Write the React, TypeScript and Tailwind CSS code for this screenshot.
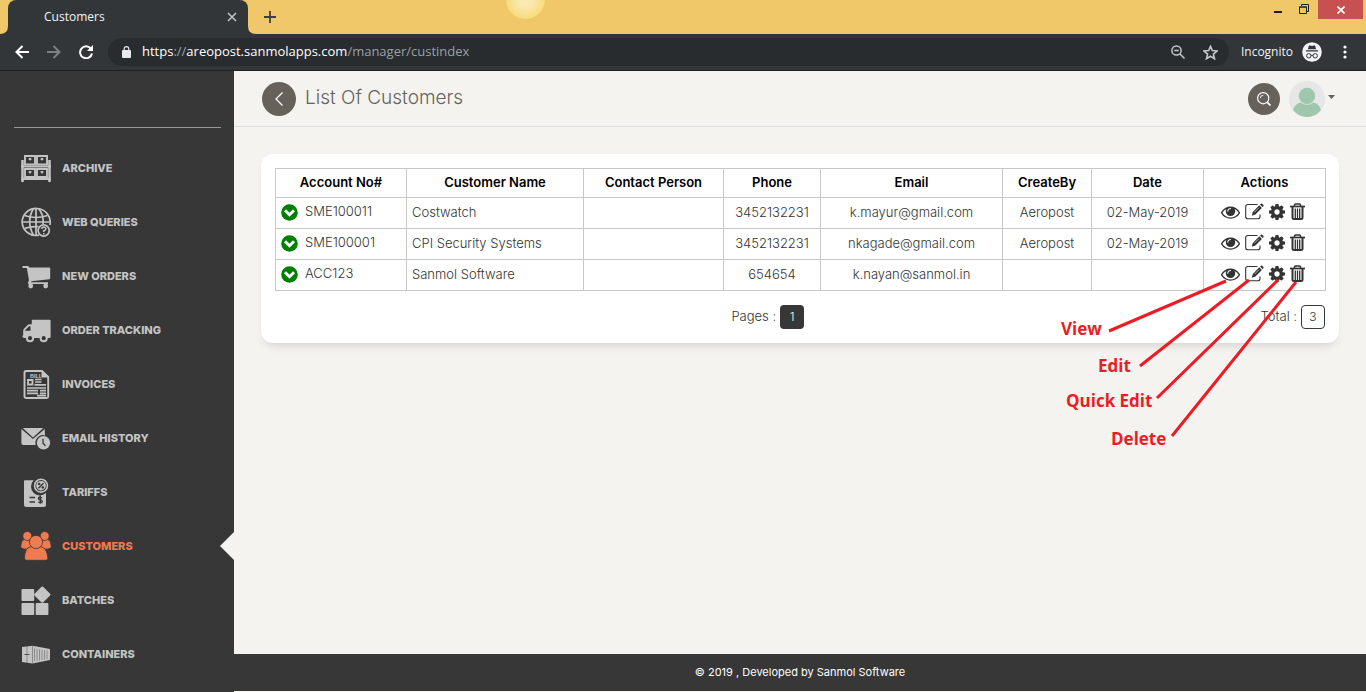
import React from 'react';

type IconProps = { className?: string };

/* ---------- Sidebar icons ---------- */
const ArchiveIcon = () => (
  <svg viewBox="0 0 30 30" className="size-[30px]" fill="none" stroke="currentColor">
    <path d="M1.500 7v22M28.500 7v22" strokeWidth="2.600" />
    <path d="M0 13.500h30M0 26h30" strokeWidth="2" />
    <path d="M4 3h10v8.500H4zM16 3h10v8.500H16zM4 16h10v8H4zM16 16h10v8H16z" strokeWidth="1.900" />
    <path d="M6.500 6h5v3h-5zM18.500 6h5v3h-5zM6.500 19h5v3h-5zM18.500 19h5v3h-5z" fill="#373737" stroke="none" />
    <path d="M8 5v2h2V5M20 5v2h2V5M8 18v2h2v-2M20 18v2h2v-2" fill="currentColor" strokeWidth=".6" />
  </svg>
);

const WebIcon = () => (
  <svg viewBox="0 0 30 30" className="size-[30px]" fill="none" stroke="currentColor" strokeWidth="1.700">
    <path d="M28.800 18A14 13.500 0 1 0 18 28.200" />
    <path d="M15 1.500v27M1.500 15h27M3.500 8.500q11.500 4 23 0M3.500 21.500q6-2.500 14-1.800" />
    <path d="M12.500 1.500Q4.800 14 12.500 28.500M17.500 1.500Q23 8 22 17" />
    <circle cx="22.700" cy="23.500" r="5.600" fill="#373737" />
    <path d="M20.800 22q0-2 2-2t2 1.800q0 1.200-2 2v1.200M22.800 26v1.500" strokeWidth="1.500" />
  </svg>
);

const CartIcon = () => (
  <svg viewBox="0 0 30 30" className="size-[30px]" fill="currentColor">
    <path d="M1.500 5h5.500q1 0 1.200 1.500h20q1 0 1 1v9.500q0 1-1 1.200L10.500 20.200l-.6 1H27V23H8q-1.500 0-1-1.500l1-2.300L5.800 7H1.500z" />
    <circle cx="9.700" cy="25" r="2.400" />
    <circle cx="24.700" cy="25" r="2.400" />
  </svg>
);

const TruckIcon = () => (
  <svg viewBox="0 0 30 30" className="size-[30px]" fill="currentColor">
    <path fillRule="evenodd" d="M10.800 5.500q0-.8.800-.8h17q1 0 1 1V22q0 1-1 1H3q-.8 0-.8-.8h-.7V20.500h.7v-5q0-.8.600-1.400L6.600 10q.6-.7 1.500-.7h2.700zM9.500 11.200H8.200L4.200 15v.8h5.300z" />
    <circle cx="9" cy="23.200" r="3.100" fill="#373737" stroke="currentColor" strokeWidth="2" />
    <circle cx="22.700" cy="23.200" r="3.100" fill="#373737" stroke="currentColor" strokeWidth="2" />
  </svg>
);

const InvoiceIcon = () => (
  <svg viewBox="0 0 30 30" className="size-[30px]" fill="none" stroke="currentColor">
    <path d="M5.500 2H21l6.200 6v19.500q0 1.500-1.500 1.500h-20Q3.500 29 3.500 27.500v-24Q3.500 2 5.500 2z" strokeWidth="1.900" />
    <path d="M21 2v6h6z" fill="currentColor" />
    <text x="9" y="8.700" fontSize="5.500" fontWeight="bold" fill="currentColor" stroke="none" fontFamily="Liberation Sans, sans-serif">BILL</text>
    <path d="M7 11h4.500v4.500H7z" strokeWidth="1.800" />
    <path d="M14 10.500h6.500M14 13h6.500M13.500 15.800H25M6 19h19M6 21.700h11M19 21.700h6M6 24.300h11M19 24.300h6M16 26.700h9" strokeWidth="1.700" />
  </svg>
);

const EmailIcon = () => (
  <svg viewBox="0 0 30 30" className="size-[30px]" fill="currentColor">
    <path d="M1.800 5h20.500L12 14.500z" />
    <path d="M.4 6L12 16 23.700 6l.3 6.400a7.700 7.700 0 0 0-9.300 9.600H2.500Q.4 22 .4 20z" />
    <circle cx="22.500" cy="19.800" r="6.700" />
    <path d="M22 15.800v4.500l2.500 2.500" fill="none" stroke="#373737" strokeWidth="1.300" />
  </svg>
);

const TariffIcon = () => (
  <svg viewBox="0 0 30 30" className="size-[30px]">
    <path d="M3 4.300q0-1 1-1h8.700A8.500 8.500 0 0 0 25 16v11.500q0 2.500-2.500 2.500h-17Q3 30 3 27.500z" fill="currentColor" />
    <circle cx="20" cy="8.700" r="6.400" fill="none" stroke="currentColor" strokeWidth="1.600" />
    <circle cx="20" cy="8.700" r="4.800" fill="currentColor" />
    <path d="M17.500 11.200l5-5" stroke="#373737" strokeWidth="1.400" />
    <circle cx="18.200" cy="7" r="1.300" fill="#373737" />
    <circle cx="21.800" cy="10.500" r="1.300" fill="#373737" />
    <path d="M8.500 20.500H14M8.500 25H14" stroke="#373737" strokeWidth="1.500" />
    <path d="M21 20.800q-3.500-1.400-3.500.600 0 1.200 1.800 1.500 1.900.400 1.900 1.600 0 2-3.900.700M19.300 18.600v8.200" fill="none" stroke="#373737" strokeWidth="1.400" />
  </svg>
);

const CustomersIcon = () => (
  <svg viewBox="0 0 30 30" className="size-[30px]" fill="currentColor" stroke="#373737" strokeWidth=".8">
    <path d="M3 8.200h5.500q2.500 2 2.500 8L6 18.200q-6.300-.2-6.300-2.400Q-.3 10 3 8.200zM27 8.200h-5.500q-2.500 2-2.500 8l5 2q6.300-.2 6.300-2.400 0-5.800-3.300-7.600z" />
    <circle cx="6.300" cy="5" r="4.500" />
    <circle cx="23.700" cy="5" r="4.500" />
    <path d="M9.500 15.800h11q3.500 1 5 5 1.200 3 1.400 6.500 0 2-2.200 2H5.500q-2.200 0-2-2.200.2-10 6-11.300z" />
    <circle cx="15" cy="11" r="6.600" />
  </svg>
);

const BatchesIcon = () => (
  <svg viewBox="0 0 30 30" className="size-[30px]" fill="currentColor">
    <rect x=".5" y="4" width="12.700" height="12" rx="1" />
    <rect x=".5" y="18" width="12.700" height="12" rx="1" />
    <rect x="14.700" y="18" width="12.700" height="12" rx="1" />
    <path d="M20.500 1.800q.8-.8 1.600 0l7 7q.8.800 0 1.600l-7 7q-.8.800-1.600 0l-7-7q-.8-.8 0-1.600z" />
  </svg>
);

const ContainerIcon = () => (
  <svg viewBox="0 0 30 30" className="size-[30px]">
    <path d="M1 8l10.500-1.200L29 10v11l-17.500 3.500L1 23z" fill="currentColor" />
    <path d="M6 7.500v16.300M11.500 7v17.200M13.500 9.500v12.500M16 9.800v12M18.500 10.300v11.200M21 10.700v10.300M23.500 11v9.700M26 11.500v8.700" stroke="#373737" strokeWidth=".4" />
    <path d="M3.500 15.500h5" stroke="#373737" strokeWidth=".8" />
  </svg>
);

/* ---------- Table icons ---------- */
const EyeIcon = ({ className }: IconProps) => (
  <svg viewBox="0 256 1792 1280" className={className} fill="currentColor">
    <path d="M1664 960q-152-236-381-353 61 104 61 225 0 185-131.500 316.500t-316.500 131.500-316.500-131.500-131.500-316.500q0-121 61-225-229 117-381 353 133 205 333.500 326.500t434.500 121.500 434.500-121.500 333.500-326.500zm-720-384q0-20-14-34t-34-14q-125 0-214.500 89.500t-89.500 214.500q0 20 14 34t34 14 34-14 14-34q0-86 61-147t147-61q20 0 34-14t14-34zm848 384q0 34-20 69-140 230-376.500 368.500t-499.500 138.500-499.500-139-376.500-368q-20-35-20-69t20-69q140-229 376.500-368t499.500-139 499.500 139 376.500 368q20 35 20 69z" />
  </svg>
);

const EditIcon = ({ className }: IconProps) => (
  <svg viewBox="0 0 19 17" className={className} fill="none" stroke="currentColor">
    <path d="M12.500 1.500H3Q.7 1.500.7 3.700v9.800q0 2.300 2.300 2.300h9.700q2.300 0 2.300-2.300V11.500" strokeWidth="1.100" />
    <path d="M14.300 2.300l2.600 2.600-6.500 6.700-3.600 1.100 1-3.700z" fill="currentColor" stroke="none" />
    <path d="M15 1.600l.9-.9q.7-.6 1.300 0l1.200 1.200q.6.600 0 1.300l-.9.900z" fill="currentColor" stroke="none" />
    <path d="M9.500 9.200l4.500-4.600" stroke="#fff" strokeWidth=".6" />
  </svg>
);

const GearIcon = ({ className }: IconProps) => (
  <svg viewBox="128 128 1536 1536" className={className} fill="currentColor">
    <path d="M1152 896q0-106-75-181t-181-75-181 75-75 181 75 181 181 75 181-75 75-181zm512-109v222q0 12-8 23t-20 13l-185 28q-19 54-39 91 35 50 107 138 10 12 10 25t-9 23q-27 37-99 108t-94 71q-12 0-26-9l-138-108q-44 23-91 38-16 136-29 186-7 28-36 28h-222q-14 0-24.500-8.500t-11.500-21.500l-28-184q-49-16-90-37l-141 107q-10 9-25 9-14 0-25-11-126-114-165-168-7-10-7-23 0-12 8-23 15-21 51-66.500t54-70.500q-27-50-41-99l-183-27q-13-2-21-12.500t-8-23.500v-222q0-12 8-23t19-13l186-28q14-46 39-92-40-57-107-138-10-12-10-24 0-10 9-23 26-36 98.500-107.500t94.500-71.500q13 0 26 10l138 107q44-23 91-38 16-136 29-186 7-28 36-28h222q14 0 24.500 8.500t11.500 21.500l28 184q49 16 90 37l142-107q9-9 24-9 13 0 25 10 129 119 165 170 7 8 7 22 0 12-8 23-15 21-51 66.500t-54 70.500q26 50 41 98l183 28q13 2 21 12.500t8 23.500z" />
  </svg>
);

const TrashIcon = ({ className }: IconProps) => (
  <svg viewBox="0 0 15 17" className={className} fill="none" stroke="currentColor">
    <path d="M0 3.500h15" strokeWidth="1.700" />
    <path d="M4.500 3.500V2q0-1 1-1h4q1 0 1 1v1.500" strokeWidth="1.500" />
    <path d="M2.500 4v10.500q0 1.500 1.500 1.500h7q1.500 0 1.500-1.500V4" strokeWidth="2" />
    <path d="M5.300 5.500v9.500M7.500 5.500v9.500M9.700 5.500v9.500" strokeWidth="1.300" />
  </svg>
);

const StatusIcon = () => (
  <svg viewBox="0 0 17 17" className="size-[17px] shrink-0">
    <circle cx="8.500" cy="8.500" r="8.300" fill="#008000" />
    <path d="M4 6.200l4.500 4.500L13 6.200" fill="none" stroke="#fff" strokeWidth="3" />
  </svg>
);

const menu = [
  { label: 'ARCHIVE', Icon: ArchiveIcon },
  { label: 'WEB QUERIES', Icon: WebIcon },
  { label: 'NEW ORDERS', Icon: CartIcon },
  { label: 'ORDER TRACKING', Icon: TruckIcon },
  { label: 'INVOICES', Icon: InvoiceIcon },
  { label: 'EMAIL HISTORY', Icon: EmailIcon },
  { label: 'TARIFFS', Icon: TariffIcon },
  { label: 'CUSTOMERS', Icon: CustomersIcon, active: true },
  { label: 'BATCHES', Icon: BatchesIcon },
  { label: 'CONTAINERS', Icon: ContainerIcon },
];

const columns = [
  { title: 'Account No#', width: 'w-[131px]' },
  { title: 'Customer Name', width: 'w-[177px]' },
  { title: 'Contact Person', width: 'w-[140px]' },
  { title: 'Phone', width: 'w-[97px]' },
  { title: 'Email', width: 'w-[182px]' },
  { title: 'CreateBy', width: 'w-[89px]' },
  { title: 'Date', width: 'w-[112px]' },
  { title: 'Actions', width: 'w-[122px]' },
];

const customers = [
  { account: 'SME100011', name: 'Costwatch', contact: '', phone: '3452132231', email: 'k.mayur@gmail.com', createBy: 'Aeropost', date: '02-May-2019' },
  { account: 'SME100001', name: 'CPI Security Systems', contact: '', phone: '3452132231', email: 'nkagade@gmail.com', createBy: 'Aeropost', date: '02-May-2019' },
  { account: 'ACC123', name: 'Sanmol Software', contact: '', phone: '654654', email: 'k.nayan@sanmol.in', createBy: '', date: '' },
];

const BrowserBar = () => (
  <header className="font-['Open_Sans',sans-serif]">
    {/* Tab strip */}
    <div className="relative flex h-[34px] items-start overflow-hidden bg-[#f0c869] pl-2">
      <div className="absolute -top-[20px] left-[506px] size-[39px] rounded-full bg-radial from-[#fbe9b5] from-20% to-[#f5d54f]" />
      <div className="relative flex h-[34px] w-60 items-center justify-between rounded-t-lg bg-[#323639] pr-[11px] pl-9">
        <svg viewBox="0 0 256 8" className="absolute bottom-0 -left-2 h-2 w-64" fill="#323639">
          <path d="M0 8q8 0 8-8v8zM256 8q-8 0-8-8v8z" />
        </svg>
        <span className="text-xs text-[#f1f3f4]">Customers</span>
        <button aria-label="Close tab" className="text-[#c4c7ca]">
          <svg viewBox="0 0 10 10" className="size-[10px]" stroke="currentColor" strokeWidth="1.500"><path d="M1 1l8 8M9 1l-8 8" /></svg>
        </button>
      </div>
      <button aria-label="New tab" className="mt-[11px] ml-4 text-[#3c4043]">
        <svg viewBox="0 0 12 12" className="size-3" stroke="currentColor" strokeWidth="1.800"><path d="M6 0v12M0 6h12" /></svg>
      </button>
      <div className="ml-auto flex items-start pr-[3px] text-[#1f1f1f]">
        <button aria-label="Minimize" className="mt-[11px] mr-[17px]"><svg viewBox="0 0 8 2" className="h-[2px] w-2" fill="currentColor"><path d="M0 0h8v2H0z" /></svg></button>
        <button aria-label="Restore" className="mt-1 mr-[9px]">
          <svg viewBox="0 0 10 10" className="size-[10px]" fill="none" stroke="currentColor"><path d="M.5 3h7v6.500h-7zM0 3h8M2.500 2V.5h7v7H8" /></svg>
        </button>
        <button aria-label="Close window" className="flex h-[19px] w-[45px] items-center justify-center bg-[#c75050] text-white">
          <svg viewBox="0 0 8 8" className="size-2" stroke="currentColor" strokeWidth="1.700"><path d="M.5.500l7 7M7.500.500l-7 7" /></svg>
        </button>
      </div>
    </div>
    {/* Address bar */}
    <div className="flex h-[37px] items-center border-b border-[#1f1f21] bg-[#323639] pr-[19px] pl-[15px]">
      <button aria-label="Back" className="text-white">
        <svg viewBox="0 0 14 14" className="size-[14px]" fill="none" stroke="currentColor" strokeWidth="2"><path d="M14 7H1.500M7.500 1L1.500 7l6 6" /></svg>
      </button>
      <button aria-label="Forward" className="ml-[18px] text-[#7d8083]">
        <svg viewBox="0 0 14 14" className="size-[14px]" fill="none" stroke="currentColor" strokeWidth="2"><path d="M0 7h12.500M6.500 1l6 6-6 6" /></svg>
      </button>
      <button aria-label="Reload" className="ml-[18px] text-white">
        <svg viewBox="0 0 14 14" className="size-[14px]" fill="none" stroke="currentColor" strokeWidth="2"><path d="M11.800 3.500A6 6 0 1 0 13 8.500" /><path d="M14 0v6H8z" fill="currentColor" stroke="none" /></svg>
      </button>
      <div className="ml-[15px] flex h-7 flex-1 items-center rounded-full bg-[#282c2f] pr-[11px] pl-[14px]">
        <svg viewBox="0 0 9 12" className="h-3 w-[9px] text-[#e8eaed]" fill="currentColor"><path d="M0 5q0-1 1-1h7q1 0 1 1v6q0 1-1 1H1q-1 0-1-1z" /><path d="M2.200 5V3q0-2.300 2.300-2.300T6.800 3v2" fill="none" stroke="currentColor" strokeWidth="1.200" /></svg>
        <a href="#" className="ml-[11px] text-[13px] text-[#9aa0a6]">
          <span className="text-white">https</span>://<span className="text-white">areopost.sanmolapps.com</span>/manager/custindex
        </a>
        <button aria-label="Zoom" className="ml-auto text-[#c4c7ca]">
          <svg viewBox="0 0 14 14" className="size-[14px]" fill="none" stroke="currentColor" strokeWidth="1.500"><circle cx="5.500" cy="5.500" r="4.600" /><path d="M9 9l4.500 4.500M3.300 5.500h4.400" /></svg>
        </button>
        <button aria-label="Bookmark" className="ml-[18px] text-[#c4c7ca]">
          <svg viewBox="0 0 15 15" className="size-[15px]" fill="none" stroke="currentColor" strokeWidth="1.600"><path d="M7.500 1.300l1.800 4.300 4.700.4-3.600 3.100 1.100 4.600-4-2.500-4 2.500 1.100-4.600L1 6l4.700-.4z" /></svg>
        </button>
      </div>
      <span className="ml-3 text-xs text-[#f1f3f4]">Incognito</span>
      <svg viewBox="0 0 20 20" className="ml-[9px] size-5">
        <circle cx="10" cy="10" r="9.800" fill="#f1f3f4" />
        <path d="M6.800 4q.2-.8 1-.6l2.200.5 2.200-.5q.8-.2 1 .6l.9 3.200H5.900zM4 8.200h12v1.200H4z" fill="#323639" />
        <path d="M9 13.500q1-.8 2 0" fill="none" stroke="#323639" />
        <circle cx="6.800" cy="13.800" r="2.200" fill="none" stroke="#323639" />
        <circle cx="13.200" cy="13.800" r="2.200" fill="none" stroke="#323639" />
      </svg>
      <button aria-label="Menu" className="ml-[21px] text-white">
        <svg viewBox="0 0 4 14" className="h-[14px] w-1" fill="currentColor"><circle cx="2" cy="2" r="1.600" /><circle cx="2" cy="7" r="1.600" /><circle cx="2" cy="12" r="1.600" /></svg>
      </button>
    </div>
  </header>
);

const Sidebar = () => (
  <aside className="w-[234px] shrink-0 bg-[#373737] pt-14 text-[#c4c4c4]">
    <div className="mr-[13px] ml-[14px] border-t border-[#979797]" />
    <nav className="mt-[13px]">
      {menu.map(({ label, Icon, active }) => (
        <a key={label} href="#" className={`relative flex h-[54px] items-center gap-[11px] pl-[21px] text-[11px] font-extrabold ${active ? 'text-[#ef7b50]' : ''}`}>
          <Icon />
          {label}
          {active && (
            <svg viewBox="0 0 14 28" className="absolute right-0 h-7 w-[14px]" fill="#f4f3ef"><path d="M14 0v28L0 14z" /></svg>
          )}
        </a>
      ))}
    </nav>
  </aside>
);

/* Red callouts that name each action icon */
const Callouts = () => (
  <svg viewBox="1040 255 299 205" className="pointer-events-none absolute top-[101px] right-0 h-[205px] w-[299px] font-['Open_Sans',sans-serif] text-[17px] font-bold" fill="#ed1c24">
    <path d="M1109 331l117-50M1140 366l109-86M1157 398l121-118M1172 436l124-154" stroke="#ed1c24" strokeWidth="3" />
    <text x="1061" y="335">View</text>
    <text x="1098" y="372">Edit</text>
    <text x="1066" y="407">Quick Edit</text>
    <text x="1111" y="445">Delete</text>
  </svg>
);

const App: React.FC = () => {
  return (
    <div className="flex min-h-screen flex-col bg-[#f4f3ef] font-['Inter',sans-serif]">
      <BrowserBar />
      <div className="flex flex-1">
        <Sidebar />
        <div className="flex min-w-0 flex-1 flex-col">
          {/* Page heading */}
          <div className="flex h-14 items-center border-b border-[#dddddd] pr-[31px] pl-7">
            <button aria-label="Go back" className="flex size-[34px] items-center justify-center rounded-full bg-[#66615b] text-white">
              <svg viewBox="0 0 8 14" className="h-[14px] w-2" fill="none" stroke="currentColor" strokeWidth="1.300"><path d="M7.500.5L1 7l6.500 6.500" /></svg>
            </button>
            <h1 className="ml-[9px] text-[19px] font-light text-[#66615b]">List Of Customers</h1>
            <button aria-label="Search" className="ml-auto flex size-8 items-center justify-center rounded-full bg-[#66615b] text-white">
              <svg viewBox="0 0 14 14" className="size-[14px]" fill="none" stroke="currentColor" strokeWidth="1.200"><circle cx="6.200" cy="6.200" r="5.600" /><path d="M3.300 6.200q0-2.900 2.900-2.900" strokeWidth=".9" /><path d="M10.300 10.300l3.200 3.200" strokeWidth="1.700" /></svg>
            </button>
            <button aria-label="Account" className="ml-[9px] flex items-center gap-[3px]">
              <svg viewBox="0 0 36 36" className="size-9">
                <circle cx="18" cy="18" r="18" fill="#e6e6e6" />
                <circle cx="18" cy="15" r="8.200" fill="#9fc7ad" />
                <path d="M4 29q1.500-6 7.500-7.500 6.500 4.500 13 0Q30.500 23 32 29q-5.500 7-14 7T4 29z" fill="#9fc7ad" />
              </svg>
              <svg viewBox="0 0 7 4" className="mb-1 h-1 w-[7px]" fill="#66615b"><path d="M0 0h7L3.500 4z" /></svg>
            </button>
          </div>

          {/* Customers card */}
          <main className="flex-1 px-[27px] pt-[27px]">
            <section className="relative rounded-xl bg-white p-[14px] text-[#333333] shadow-[0_6px_10px_-4px_rgba(0,0,0,0.15)]">
              <table className="w-full table-fixed border-collapse text-[13px] font-light">
                <thead>
                  <tr className="h-[29px]">
                    {columns.map((c) => (
                      <th key={c.title} className={`${c.width} border border-[#c8c8c8] font-semibold text-black`}>{c.title}</th>
                    ))}
                  </tr>
                </thead>
                <tbody className="text-center [&_td]:border [&_td]:border-[#c8c8c8]">
                  {customers.map((c) => (
                    <tr key={c.account} className="h-[31px]">
                      <td className="pb-[2px] pl-[5px]">
                        <div className="flex items-center gap-[7px]"><StatusIcon />{c.account}</div>
                      </td>
                      <td className="pl-[5px] text-left">{c.name}</td>
                      <td>{c.contact}</td>
                      <td>{c.phone}</td>
                      <td>{c.email}</td>
                      <td>{c.createBy}</td>
                      <td>{c.date}</td>
                      <td className="pr-1 pb-[3px]">
                        <div className="flex items-center justify-center gap-[5px]">
                          <button aria-label="View"><EyeIcon className="h-[14px] w-[19px]" /></button>
                          <button aria-label="Edit"><EditIcon className="h-[17px] w-[19px]" /></button>
                          <button aria-label="Quick edit"><GearIcon className="size-4" /></button>
                          <button aria-label="Delete"><TrashIcon className="h-[17px] w-[15px]" /></button>
                        </div>
                      </td>
                    </tr>
                  ))}
                </tbody>
              </table>
              <div className="mt-[14px] flex text-[13px] font-light">
                <div className="flex flex-1 items-center justify-center gap-1">
                  <span>Pages :</span>
                  <button className="size-6 rounded-[4px] bg-[#373737] text-xs text-white">1</button>
                </div>
                <div className="flex items-center gap-1">
                  <span>Total :</span>
                  <span className="flex size-6 items-center justify-center rounded-[4px] border border-[#373737] text-xs">3</span>
                </div>
              </div>
              <Callouts />
            </section>
          </main>

          <footer className="mb-px flex h-[37px] items-center justify-center bg-[#373737] text-[11px] text-white">
            © 2019 , Developed by Sanmol Software
          </footer>
        </div>
      </div>
    </div>
  );
};

export default App;
